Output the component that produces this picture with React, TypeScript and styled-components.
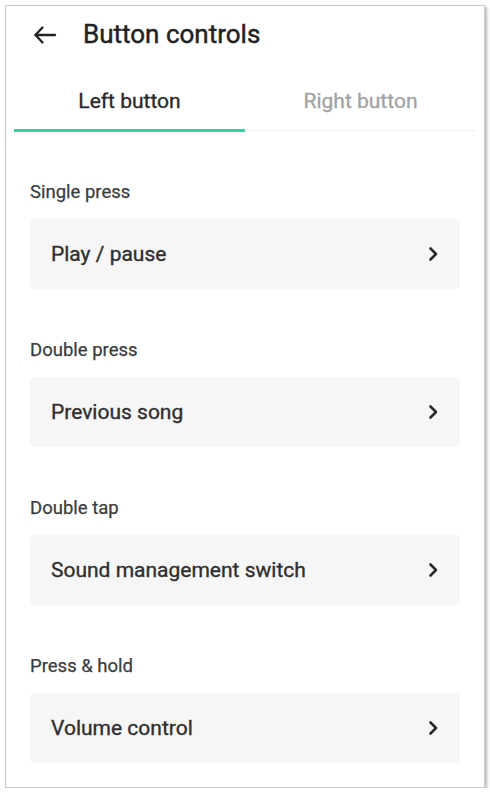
import React from 'react';
import styled, { createGlobalStyle } from 'styled-components';

const GlobalStyle = createGlobalStyle`
  html, body {
    margin: 0;
    padding: 0;
    background: #ffffff;
  }
  body {
    font-family: Roboto, "Noto Sans", "Liberation Sans", sans-serif;
    color: #2b2b2b;
  }
`;

const Frame = styled.div`
  box-sizing: border-box;
  margin: 5px 0 0 5px;
  width: 480px;
  height: 783px;
  border: 1px solid #c9c9c9;
  box-shadow: 2px 2px 3px rgba(0, 0, 0, 0.28);
  background: #ffffff;
  overflow: hidden;
`;

const Header = styled.div`
  display: flex;
  align-items: center;
  height: 56px;
  padding-left: 27px;
`;

const BackButton = styled.button`
  display: flex;
  align-items: center;
  justify-content: center;
  width: 24px;
  height: 24px;
  padding: 0;
  border: none;
  background: none;
  margin-top: 1px;
`;

const Title = styled.h1`
  margin: 0 0 0 26px;
  font-size: 26px;
  font-weight: 400;
  -webkit-text-stroke: 0.45px currentColor;
  color: #222222;
`;

const Tabs = styled.div`
  display: flex;
  padding: 0 8px;
`;

const Tab = styled.div<{ $active?: boolean }>`
  flex: 1 1 0;
  box-sizing: border-box;
  text-align: center;
  padding-top: 27px;
  line-height: 24px;
  font-size: 21px;
  font-weight: 400;
  -webkit-text-stroke: 0.35px currentColor;
  color: ${p => (p.$active ? '#2a2a2a' : '#a3a3a3')};
  padding-bottom: ${p => (p.$active ? '16px' : '17px')};
  border-bottom: ${p => (p.$active ? '3px solid #31cf9f' : '1px solid #efefef')};
  margin-bottom: ${p => (p.$active ? '0' : '1px')};
`;

const Content = styled.div`
  padding: 50px 24px 0 24px;
  display: flex;
  flex-direction: column;
  gap: 51px;
`;

const Section = styled.section`
  display: flex;
  flex-direction: column;
  gap: 16px;
`;

const Label = styled.div`
  font-size: 18.5px;
  line-height: 21px;
  font-weight: 400;
  -webkit-text-stroke: 0.25px currentColor;
  color: #3c3c3c;
`;

const Row = styled.div`
  display: flex;
  align-items: center;
  justify-content: space-between;
  height: 70px;
  padding: 0 21px;
  border-radius: 5px;
  background: #f6f6f6;
  font-size: 21px;
  font-weight: 400;
  -webkit-text-stroke: 0.35px currentColor;
  color: #2f2f2f;
`;

const ArrowLeft = () => (
  <svg width="24" height="24" viewBox="0 0 24 24" fill="none" stroke="#222" strokeWidth="2.3" strokeLinecap="round" strokeLinejoin="round">
    <path d="M22 12H2.5" />
    <path d="M9.5 4.5L2.5 12l7 7.5" />
  </svg>
);

const Chevron = () => (
  <svg width="12" height="16" viewBox="0 0 12 16" fill="none" stroke="#2a2a2a" strokeWidth="2.6" strokeLinecap="round" strokeLinejoin="round">
    <path d="M3.5 2.5L9 8l-5.5 5.5" />
  </svg>
);

const controls = [
  { label: 'Single press', value: 'Play / pause' },
  { label: 'Double press', value: 'Previous song' },
  { label: 'Double tap', value: 'Sound management switch' },
  { label: 'Press & hold', value: 'Volume control' },
];

export default function App() {
  return (
    <>
      <GlobalStyle />
      <Frame>
        <Header>
          <BackButton aria-label="Back">
            <ArrowLeft />
          </BackButton>
          <Title>Button controls</Title>
        </Header>
        <Tabs>
          <Tab $active>Left button</Tab>
          <Tab>Right button</Tab>
        </Tabs>
        <Content>
          {controls.map(c => (
            <Section key={c.label}>
              <Label>{c.label}</Label>
              <Row>
                <span>{c.value}</span>
                <Chevron />
              </Row>
            </Section>
          ))}
        </Content>
      </Frame>
    </>
  );
}
